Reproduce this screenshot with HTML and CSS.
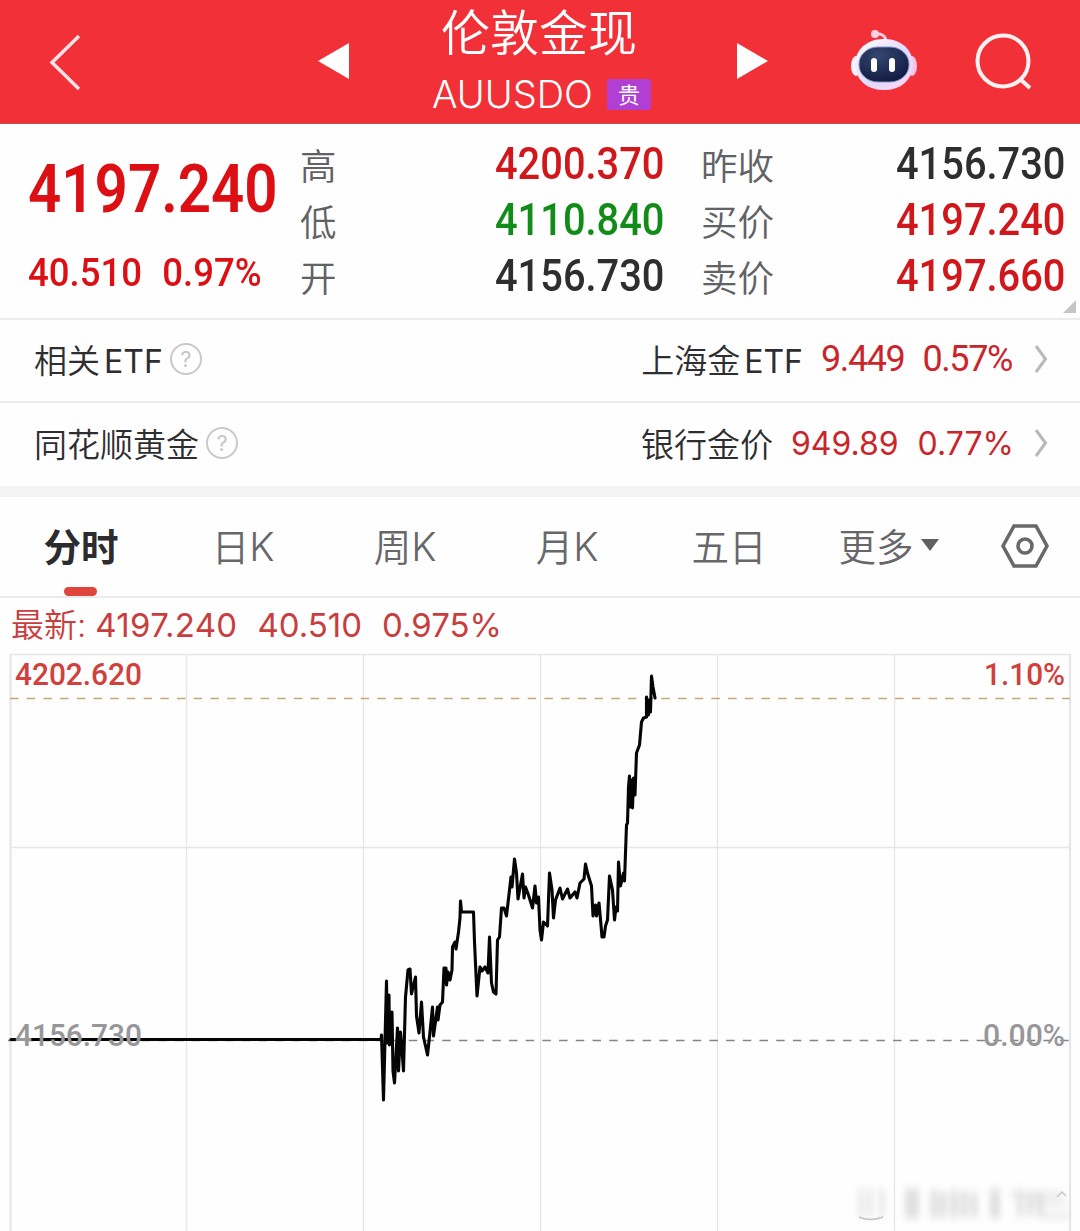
FILE: index.html
```html
<!DOCTYPE html>
<html lang="zh-CN">
<head>
<meta charset="utf-8">
<title>伦敦金现</title>
<link rel="stylesheet" href="styles.css">
</head>
<body>
<header class="topbar">
  <svg class="back" width="34" height="58" viewBox="0 0 34 58"><path d="M31 3 4 29.500 31 56"/></svg>
  <svg class="prev" width="32" height="38" viewBox="0 0 32 38"><path d="M31 1v36L0 19z"/></svg>
  <div class="heading">
    <h1>伦敦金现</h1>
    <div class="code"><span class="symbol">AUUSDO</span><span class="badge">贵</span></div>
  </div>
  <svg class="next" width="32" height="38" viewBox="0 0 32 38"><path d="M1 1v36l31-18z"/></svg>
  <svg class="robot" width="68" height="64" viewBox="0 0 68 64">
    <defs>
      <linearGradient id="shell" x1="0" y1="0" x2="1" y2="1"><stop offset="0" stop-color="#fff"/><stop offset=".55" stop-color="#e2daff"/><stop offset="1" stop-color="#ffd5ef"/></linearGradient>
      <radialGradient id="visor" cx=".4" cy=".25" r=".8"><stop offset="0" stop-color="#35466f"/><stop offset="1" stop-color="#101a40"/></radialGradient>
    </defs>
    <path d="M24 5c8-1 12 2 12 8" fill="none" stroke="#ffd0e4" stroke-width="3"/>
    <circle cx="25" cy="5" r="4" fill="#ffd0e4"/>
    <ellipse cx="6" cy="37" rx="5" ry="10" fill="#fff0fa"/>
    <ellipse cx="62" cy="37" rx="5" ry="10" fill="#f6c4e8"/>
    <rect x="5" y="10" width="58" height="51" rx="27" ry="25" fill="url(#shell)"/>
    <rect x="9" y="18" width="50" height="35" rx="19" ry="17" fill="url(#visor)" stroke="#8192cf" stroke-width="1"/>
    <rect x="21" y="29" width="6" height="14" rx="3" fill="#fff"/><rect x="39" y="29" width="6" height="14" rx="3" fill="#fff"/>
  </svg>
  <svg class="search" width="60" height="60" viewBox="0 0 60 60"><circle cx="28" cy="28" r="25.500"/><path d="m45 46 10 9"/></svg>
</header>

<section class="quote">
  <div class="price">
    <div class="last din">4197.240</div>
    <div class="change din"><span>40.510</span><span>0.97%</span></div>
  </div>
  <dl class="stats first">
    <dt>高</dt><dd class="din up">4200.370</dd>
    <dt>低</dt><dd class="din down">4110.840</dd>
    <dt>开</dt><dd class="din">4156.730</dd>
  </dl>
  <dl class="stats">
    <dt>昨收</dt><dd class="din">4156.730</dd>
    <dt>买价</dt><dd class="din up">4197.240</dd>
    <dt>卖价</dt><dd class="din up">4197.660</dd>
  </dl>
  <i class="expand"></i>
</section>

<section class="related">
  <div class="row">
    <span>相关<b class="etf">ETF</b></span><i class="help">?</i>
    <span class="name">上海金<b class="etf">ETF</b></span>
    <span class="figures narrow"><span>9.449</span><span>0.57%</span></span>
    <svg class="chevron" width="14" height="28" viewBox="0 0 14 28"><path d="m2 1 9.500 13L2 27"/></svg>
  </div>
  <div class="row">
    <span>同花顺黄金</span><i class="help">?</i>
    <span class="name">银行金价</span>
    <span class="figures"><span>949.89</span><span>0.77%</span></span>
    <svg class="chevron" width="14" height="28" viewBox="0 0 14 28"><path d="m2 1 9.500 13L2 27"/></svg>
  </div>
</section>

<nav class="tabs">
  <span class="tab active">分时</span>
  <span class="tab">日<b>K</b></span>
  <span class="tab">周<b>K</b></span>
  <span class="tab">月<b>K</b></span>
  <span class="tab">五日</span>
  <span class="tab more">更多<i class="caret"></i></span>
  <svg class="settings" width="48" height="44" viewBox="0 0 48 44"><path d="M13 2h22l11 20-11 20H13L2 22z"/><circle cx="24" cy="22" r="7"/></svg>
</nav>

<p class="latest"><span>最新:</span><span class="num">4197.240</span><span class="num">40.510</span><span class="num">0.975%</span></p>

<svg class="chart" width="1080" height="578" viewBox="0 653 1080 578">
  <defs>
    <filter id="soften" x="-10%" y="-30%" width="120%" height="160%"><feGaussianBlur stdDeviation="3 4"/></filter>
  </defs>
  <g class="grid">
    <path d="M10 654.500H1070M10 847.500H1070M186.500 654v577M363.500 654v577M540.500 654v577M717.500 654v577M894.500 654v577"/>
    <path class="edge" d="M10.500 654v577M1070 654v577"/>
  </g>
  <path class="dash current" d="M10 698.500H1070"/>
  <path class="dash base" d="M8 1040.500H1070"/>
  <path class="trend" d="M11 1039.500H381L381.500 1035 383.500 1100 386.500 981 387.500 1043 389 995 389.500 1045 392 1012 393 1071 394.500 1083 397.500 1028 398.500 1071 400.500 1032 402 1050 403.500 1071 405.500 997 408 970 410 969 411.500 994 415.500 977 416.500 1016 419 1033 421.500 1002 423.500 1037 427.500 1055 430 1032 432.500 1007 433.500 1036 437.500 1007 438 1020 440 1005 442.500 1002 444 968 446 968 446.500 985 448 972 450 980 452 970 452.500 947 455 942 456 949 458.500 932 460 918 460.500 901 461.500 912 473.500 912 474.500 942 477 996 480 967 482 971 485 967 488 973 489.500 937 491.500 983 493.500 992 496 994 497.500 940 499.500 937 501.500 908 504 908 506.500 916 509.500 890 511 877 512 887 514.500 859 516.500 873 518 899 522.500 874 524 898 525.500 887 528.500 895 532.500 908 535 886 536.500 903 538.500 897 540 930 541.500 940 543.500 922 547.500 926 549.500 873 552 890 553.500 918 555.500 900 560 888 562.500 899 567.500 889 570 898 575 892 577 898 580 883 584 879 585.500 864 587.500 873 591.500 886 593 916 595.500 905 596.500 916 599 903 601 925 602 937 604 937 605.500 926 607.500 920 609.500 876 612.500 890 614.500 920 616 907 617.500 911 618.500 862 620.500 886 623.500 873 624.500 881 626.500 825 627.500 823 628.500 787 629.500 776 630.500 807 631.500 780 632.500 808 633.500 778 635 795 636.500 753 639.500 745 641.500 722 643.500 718 646.500 717 646.500 697 648.500 715 649.500 700 650.500 712 651.500 676 653 687 655 698"/>
  <g class="axis">
    <text class="up" x="15" y="685" textLength="127" lengthAdjust="spacingAndGlyphs">4202.620</text>
    <text class="up" x="984" y="685" textLength="81" lengthAdjust="spacingAndGlyphs">1.10%</text>
    <text x="15" y="1046" textLength="127" lengthAdjust="spacingAndGlyphs">4156.730</text>
    <text x="983" y="1046" textLength="82" lengthAdjust="spacingAndGlyphs">0.00%</text>
  </g>
  <g class="smear" filter="url(#soften)">
    <path d="M861 1189v28M870 1189v28M882 1189v28" stroke-width="4"/>
    <path d="M912 1189v29" stroke-width="14"/><path d="M934 1190v28M943 1192v26M954 1190v28M964 1191v26M974 1193v24" stroke-width="7"/>
    <path d="M995 1189v29" stroke-width="10"/><path d="M1020 1190v26M1030 1194v22M1040 1191v26" stroke-width="6"/>
    <path d="M1010 1194h52M1030 1203h36M1040 1216h30" stroke-width="4"/>
  </g>
  <path class="mark" d="M859 1217q11 5 24 0M1057 1197l5-5 4 4"/>
</svg>
</body>
</html>
```
FILE: styles.css
```css
* { box-sizing: border-box; }
body {
  margin: 0;
  width: 1080px;
  height: 1231px;
  overflow: hidden;
  background: #fefefe;
  color: #2e2e30;
  font-family: Inter, "Noto Sans CJK SC", sans-serif;
}
h1, p, dl, dd { margin: 0; }
i { font-style: normal; }
b { font-weight: inherit; }
svg { display: block; flex: none; }

.topbar {
  height: 124px;
  display: flex;
  align-items: flex-start;
  background: #f23038;
  border-bottom: 1px solid #c9505a;
  color: #fff;
}
.back { margin: 33px 0 0 48px; fill: none; stroke: #ffe3e6; stroke-width: 3.5; }
.prev { margin: 42px 0 0 236px; fill: #fff; }
.next { margin: 42px 0 0 38px; fill: #fff; }
.robot { margin: 29px 0 0 82px; }
.search { margin: 33px 0 0 57px; fill: none; stroke: #fff0f1; stroke-width: 4; }
.heading { width: 298px; margin-left: 50px; display: flex; flex-direction: column; align-items: flex-start; padding-left: 32px; }
.heading h1 { font: 350 49px/67px Inter, "Noto Sans CJK SC", sans-serif; height: 62px; margin-left: 9px; }
.code { display: flex; align-items: center; height: 64px; gap: 14px; }
.symbol { font-size: 38px; font-weight: 300; line-height: 64px; }
.badge { width: 44px; height: 31px; border-radius: 2px; background: #b13fd4; text-align: center; font: 22px/28px "Noto Sans CJK SC", sans-serif; }

.din { font-family: Roboto, sans-serif; font-weight: 500; }
.up { color: #d0181c; }
.down { color: #128c18; }
.quote { position: relative; display: flex; height: 196px; border-bottom: 2px solid #ececec; }
.price { width: 301px; padding-left: 28px; color: #dc1014; }
.last { height: 96px; margin-top: 17px; font-size: 67px; font-weight: 600; line-height: 96px; transform: scaleX(.87); transform-origin: left; }
.change { display: flex; gap: 22px; margin-top: 12px; font-size: 39.5px; line-height: 48px; transform: scaleX(.925); transform-origin: left; }
.stats { display: grid; grid-template-columns: 76px 1fr; grid-auto-rows: 56px; width: 362px; padding-top: 12px; }
.stats.first { margin-right: 39px; }
.stats dt { font: 350 36.5px/57px "Noto Sans CJK SC", sans-serif; color: #626265; white-space: nowrap; margin-left: -1px; }
.stats dd { font-size: 45px; line-height: 56px; text-align: right; margin-right: -1.5px; transform: scaleX(.885); transform-origin: right; }
.expand { position: absolute; right: 4px; bottom: 5px; border: solid transparent; border-width: 0 0 13px 13px; border-bottom-color: #c6c6c8; }

.related { border-bottom: 11px solid #f4f4f5; }
.row { display: flex; align-items: center; height: 83px; padding: 0 32px 3px 34px; border-bottom: 2px solid #ececec; font-size: 33px; font-weight: 350; }
.row + .row { border-bottom: 0; }
.etf { margin-left: 4px; font-size: 32px; font-weight: 400; }
.help { width: 32px; height: 32px; margin-left: 7px; border: 2px solid #c9c9cc; border-radius: 50%; color: #c5c5c8; font: 22px/28px Inter, sans-serif; text-align: center; }
.name { margin-left: auto; }
.figures { display: flex; gap: 19px; margin: 0 20px 0 18px; color: #c9262b; font-size: 32px; font-weight: 400; }
.figures.narrow { font: 400 36px/1 Roboto, sans-serif; letter-spacing: -1.4px; gap: 18px; margin-right: 22px; }
.chevron { fill: none; stroke: #b9b9bb; stroke-width: 3; }

.tabs { display: flex; align-items: flex-start; height: 101px; border-bottom: 2px solid #ebebed; color: #67676a; font: 350 37.5px/96px "Noto Sans CJK SC", sans-serif; }
.tab { width: 162px; height: 99px; text-align: center; white-space: nowrap; }
.tab b { font: 300 39px/1 Inter, sans-serif; }
.tab.active { position: relative; color: #2c2c2e; font-weight: 700; }
.tab.active::after { content: ""; position: absolute; left: 64px; bottom: 0; width: 33px; height: 9px; border-radius: 5px; background: #df453d; }
.more { display: flex; align-items: center; justify-content: center; gap: 7px; height: 96px; padding-right: 5px; }
.caret { border: solid transparent; border-width: 12px 9px 0; border-top-color: #606063; }
.settings { margin: 27px 0 0 29px; fill: none; stroke: #68686b; stroke-width: 3.6; }

.latest { display: flex; height: 55px; padding-left: 11px; color: #c83e3e; font-size: 33px; font-weight: 350; line-height: 55px; white-space: nowrap; }
.num { margin-left: 20px; font-weight: 400; }
.num:nth-child(2) { margin-left: 9px; letter-spacing: .3px; }

.chart .grid { fill: none; stroke: #e6e6e8; stroke-width: 1.3; }
.chart .edge { stroke-width: 2.2; }
.dash { fill: none; stroke-width: 1.6; stroke-dasharray: 8.5 8.2; }
.current { stroke: #c5a878; }
.base { stroke: #858587; }
.trend { fill: none; stroke: #050505; stroke-width: 3.1; stroke-linejoin: round; stroke-linecap: round; }
.axis { font: 500 31px Roboto, sans-serif; fill: #97979a; }
.axis .up { fill: #d1403c; }
.smear { fill: none; stroke: #d2d2d2; opacity: .7; }
.mark { fill: none; stroke: #c5c5c5; stroke-width: 1.5; }
```
